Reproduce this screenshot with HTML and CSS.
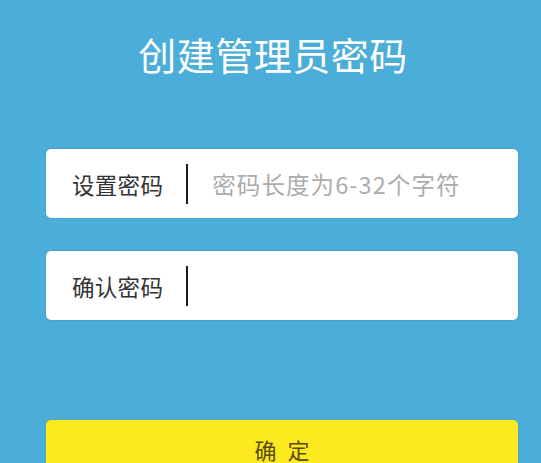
FILE: index.html
```html
<!DOCTYPE html>
<html lang="zh-CN">
<head>
<meta charset="utf-8">
<title>创建管理员密码</title>
<link rel="stylesheet" href="styles.css">
</head>
<body>
<div class="page">
  <h1 class="title">创建管理员密码</h1>
  <div class="form">
    <div class="field">
      <span class="label">设置密码</span>
      <span class="divider"></span>
      <span class="placeholder">密码长度为6-32个字符</span>
    </div>
    <div class="field">
      <span class="label">确认密码</span>
      <span class="divider"></span>
    </div>
  </div>
  <div class="button">确 定</div>
</div>
</body>
</html>
```
FILE: styles.css
```css
html, body {
  margin: 0;
  padding: 0;
  background: #4baed8;
  height: 100%;
  overflow: hidden;
}
.page {
  font-family: "Noto Sans CJK SC", "Noto Sans", sans-serif;
  padding: 34px 23px 0 46px;
}
.title {
  margin: 0 0 0 -46px;
  padding-left: 46px;
  font-size: 38px;
  line-height: 40px;
  font-weight: normal;
  color: #ffffff;
  text-align: center;
  letter-spacing: 0.5px;
  transform: translateX(-9px);
}
.form {
  margin-top: 75px;
  display: flex;
  flex-direction: column;
  gap: 33px;
}
.field {
  height: 69px;
  background: #ffffff;
  border-radius: 5px;
  box-shadow: 0 0 2px rgba(40, 110, 150, 0.5);
  display: flex;
  align-items: center;
  padding-left: 26px;
  box-sizing: border-box;
}
.label {
  font-size: 22.5px;
  color: #333333;
  letter-spacing: 0.3px;
}
.divider {
  width: 2px;
  height: 40px;
  background: #1c1c1c;
  margin: 0 24px 0 23px;
}
.placeholder {
  font-size: 23.5px;
  color: #acacac;
  letter-spacing: 1.1px;
}
.button {
  margin-top: 100px;
  height: 60px;
  background: #fde91f;
  border-radius: 5px;
  box-shadow: 0 0 2px rgba(120, 150, 60, 0.6);
  color: #5b4c12;
  font-size: 22px;
  text-align: center;
  padding-top: 13px;
  padding-left: 3px;
  box-sizing: border-box;
  letter-spacing: 3px;
}
```
